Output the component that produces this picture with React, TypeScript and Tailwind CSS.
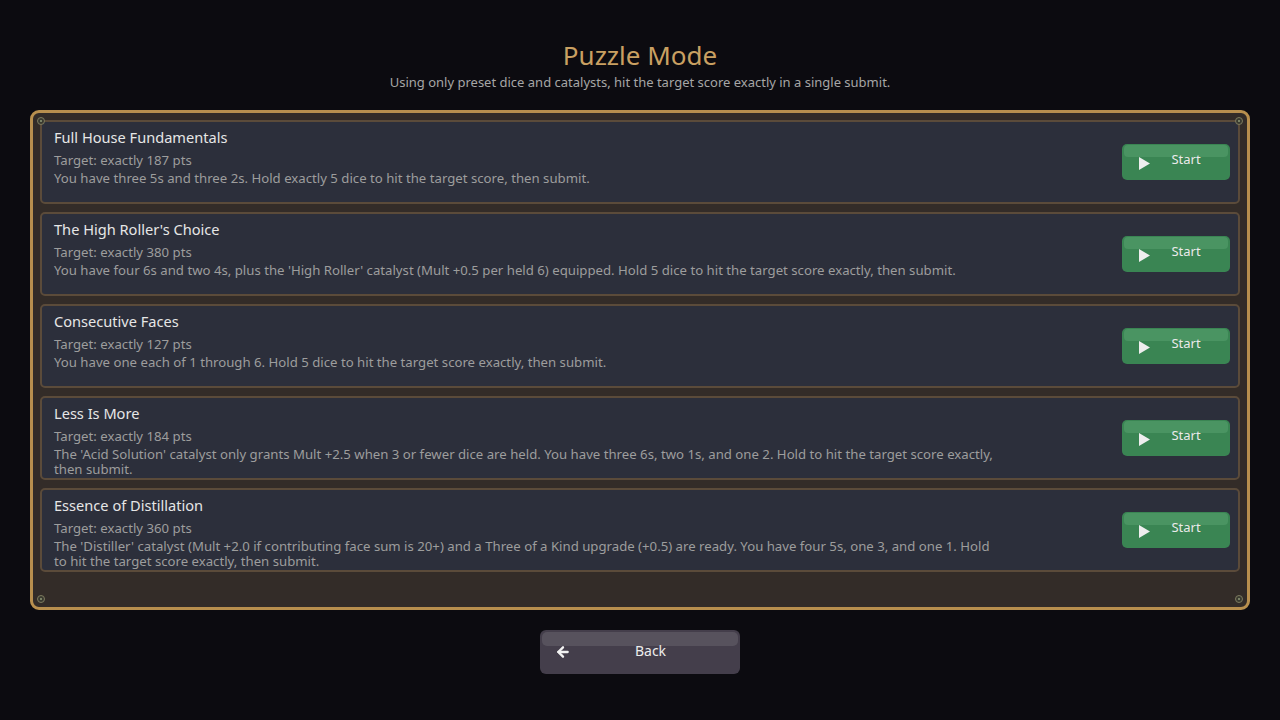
import { ArrowLeft } from "lucide-react";

type Puzzle = {
  title: string;
  target: number;
  desc: string;
};

const puzzles: Puzzle[] = [
  {
    title: "Full House Fundamentals",
    target: 187,
    desc: "You have three 5s and three 2s. Hold exactly 5 dice to hit the target score, then submit.",
  },
  {
    title: "The High Roller's Choice",
    target: 380,
    desc: "You have four 6s and two 4s, plus the 'High Roller' catalyst (Mult +0.5 per held 6) equipped. Hold 5 dice to hit the target score exactly, then submit.",
  },
  {
    title: "Consecutive Faces",
    target: 127,
    desc: "You have one each of 1 through 6. Hold 5 dice to hit the target score exactly, then submit.",
  },
  {
    title: "Less Is More",
    target: 184,
    desc: "The 'Acid Solution' catalyst only grants Mult +2.5 when 3 or fewer dice are held. You have three 6s, two 1s, and one 2. Hold to hit the target score exactly, then submit.",
  },
  {
    title: "Essence of Distillation",
    target: 360,
    desc: "The 'Distiller' catalyst (Mult +2.0 if contributing face sum is 20+) and a Three of a Kind upgrade (+0.5) are ready. You have four 5s, one 3, and one 1. Hold to hit the target score exactly, then submit.",
  },
];

function Rivet({ className }: { className: string }) {
  return (
    <span
      className={`absolute w-[8px] h-[8px] rounded-full border border-[#7d7a5e] bg-[#3a3a30] flex items-center justify-center ${className}`}
    >
      <span className="w-[2px] h-[2px] rounded-full bg-[#8f9a78]" />
    </span>
  );
}

function PuzzleCard({ p }: { p: Puzzle }) {
  return (
    <div className="h-[84px] rounded-[5px] border-2 border-[#5b4b3a] bg-[#2c2f3b] flex items-center pl-[12px] pr-[8px]">
      <div className="flex-1 h-full pt-[4px]">
        <div className="text-[14.6px] leading-[22px] text-[#e6e6e6]">{p.title}</div>
        <div className="text-[13.2px] leading-[16px] text-[#9d9d9d] mt-[4px]">
          Target: exactly {p.target} pts
        </div>
        <div className="text-[13.2px] leading-[15px] text-[#9d9d9d] mt-[3px] max-w-[945px]">
          {p.desc}
        </div>
      </div>
      <button className="relative w-[108px] h-[36px] rounded-[5px] bg-[#3a8553] overflow-hidden flex items-center shrink-0">
        <span className="absolute left-[2px] right-[2px] top-[1px] h-[12px] rounded-[4px] bg-[#4a9462]" />
        <svg className="relative ml-[17px] mt-[2px]" width="11" height="13" viewBox="0 0 11 13">
          <polygon points="0,0 11,6.5 0,13" fill="#eeeeee" />
        </svg>
        <span className="relative flex-1 text-center pr-[8px] text-[13px] text-[#eaeaea] -mt-[4px]">Start</span>
      </button>
    </div>
  );
}

export default function App() {
  return (
    <div
      className="w-[1280px] h-[720px] bg-[#0c0b10] flex flex-col items-center"
      style={{ fontFamily: '"Noto Sans", "Noto Sans CJK KR", sans-serif' }}
    >
      <h1 className="mt-[36px] text-[26px] leading-[38px] text-[#c9a062]">Puzzle Mode</h1>
      <p className="text-[13px] leading-[16px] text-[#a6a6a6]">
        Using only preset dice and catalysts, hit the target score exactly in a single submit.
      </p>

      <div className="relative mt-[20px] w-[1220px] h-[500px] rounded-[9px] border-[3px] border-[#b88f4e] bg-[#332c28] pt-[7px] px-[7px]">
        <Rivet className="left-[4px] top-[4px]" />
        <Rivet className="right-[4px] top-[4px]" />
        <Rivet className="left-[4px] bottom-[4px]" />
        <Rivet className="right-[4px] bottom-[4px]" />
        <div className="flex flex-col gap-[8px]">
          {puzzles.map((p) => (
            <PuzzleCard key={p.title} p={p} />
          ))}
        </div>
      </div>

      <button className="relative mt-[20px] w-[200px] h-[44px] rounded-[6px] bg-[#443e4b] overflow-hidden flex items-center">
        <span className="absolute left-[2px] right-[2px] top-[2px] h-[14px] rounded-[5px] bg-[#57525d]" />
        <ArrowLeft className="relative ml-[15px] w-[16px] h-[16px] text-[#f2f2f2]" strokeWidth={3.5} />
        <span className="relative flex-1 text-center pr-[10px] text-[14px] text-[#ececec] -mt-[4px]">Back</span>
      </button>
    </div>
  );
}
